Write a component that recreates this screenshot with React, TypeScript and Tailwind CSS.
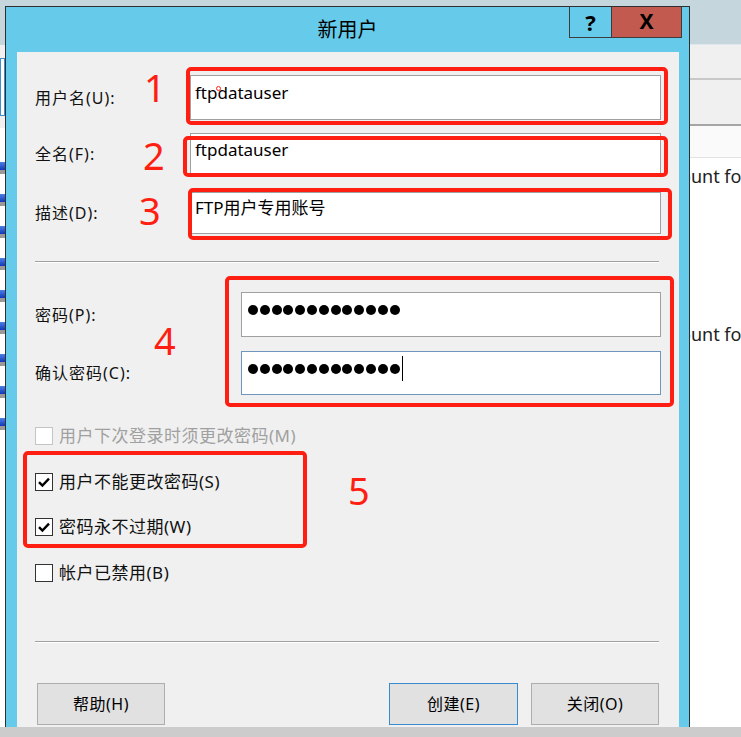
import React from 'react';

const FONT = "font-['Noto_Sans','Noto_Sans_CJK_SC',sans-serif]";

function Dots({ caret }: { caret?: boolean }) {
  return (
    <div className="flex items-center h-[25px] mt-[4px] pl-[6px] gap-[1.8px]">
      {Array.from({ length: 13 }).map((_, i) => (
        <span key={i} className="block w-[10px] h-[10px] rounded-full bg-black" />
      ))}
      {caret && <span className="block w-[1px] h-[25px] bg-black ml-[1px]" />}
    </div>
  );
}

function Check({ checked, disabled, label }: { checked?: boolean; disabled?: boolean; label: string }) {
  return (
    <div className="flex items-center h-[24px]">
      <span
        className={
          'flex items-center justify-center w-[18px] h-[18px] border bg-white ' +
          (disabled ? 'border-[#c4c4c4]' : 'border-[#333333]')
        }
      >
        {checked && (
          <svg width="14" height="14" viewBox="0 0 14 14">
            <path d="M2 7.2 L5.4 10.6 L12 3.6" fill="none" stroke="#000" strokeWidth="2.4" />
          </svg>
        )}
      </span>
      <span
        className={
          'ml-[6px] text-[17px] leading-[24px] tracking-[0.5px] ' + (disabled ? 'text-[#a0a0a0]' : 'text-[#111]')
        }
      >
        {label}
      </span>
    </div>
  );
}

export default function App() {
  return (
    <div className={'w-[741px] h-[737px] overflow-hidden flex flex-col bg-white ' + FONT}>
      <div className="flex h-[727px] overflow-hidden">
        {/* window behind, left edge */}
        <div className="w-[5px] flex flex-col">
          <div className="h-[45px] bg-[#c5d6dd]" />
          <div className="h-[83px] bg-[#f0f0f0] pt-[13px]">
            <div className="h-[58px] border border-[#3d8fd1] bg-white" />
          </div>
          <div className="flex-1 bg-white pt-[34px] flex flex-col gap-[20px]">
            {Array.from({ length: 9 }).map((_, i) => (
              <div key={i} className="flex flex-col">
                <span className="block h-[8px] bg-gradient-to-b from-[#4f7fe8] to-[#1436b8]" />
                <span className="block h-[4px] bg-[#9a9a9a]" />
              </div>
            ))}
          </div>
        </div>

        {/* dialog */}
        <div className="w-[685px] flex flex-col">
          <div className="h-[6px] bg-[#c5d6dd]" />
          <div className="flex-1 flex flex-col border-x border-t border-[#2f2f2f] bg-[#66cbea]">
            <div className="relative h-[45px] flex items-center justify-center">
              <span className="text-[20px] text-black">新用户</span>
              <div className="absolute top-0 right-[7px] flex h-[31px] border-x border-b border-[#3c3c3c]">
                <div className="w-[41px] flex items-center justify-center text-[22px] font-bold text-black">?</div>
                <div className="w-[70px] border-l border-[#3c3c3c] bg-[#c35a4f] flex items-center justify-center text-[21px] font-bold text-black">
                  X
                </div>
              </div>
            </div>

            <div className="relative flex-1 ml-[11px] mr-[10px] bg-[#f0f0f0] px-[18px] pt-[23px] flex flex-col text-[16px] tracking-[1px] text-[#111]">
              <div className="flex items-center h-[45px]">
                <span className="w-[155px]">用户名(U):</span>
                <div className="w-[471px] h-[45px] border border-[#a0a0a0] bg-white pl-[4px] pt-[6px] leading-[22px] text-[17px] tracking-normal text-black">
                  ftpdatauser
                </div>
              </div>
              <div className="flex items-center h-[42px] mt-[13px]">
                <span className="w-[155px]">全名(F):</span>
                <div className="w-[471px] h-[42px] border border-[#a0a0a0] bg-white pl-[4px] pt-[5px] leading-[22px] text-[17px] tracking-normal text-black">
                  ftpdatauser
                </div>
              </div>
              <div className="flex items-center h-[42px] mt-[17px]">
                <span className="w-[155px]">描述(D):</span>
                <div className="w-[471px] h-[42px] border border-[#a0a0a0] bg-white pl-[4px] pt-[4px] leading-[22px] text-[17px] tracking-normal text-black">
                  FTP用户专用账号
                </div>
              </div>

              <div className="w-[624px] h-[2px] mt-[27px] border-t border-[#a0a0a0] border-b border-b-white" />

              <div className="flex items-center h-[45px] mt-[29px]">
                <span className="w-[206px]">密码(P):</span>
                <div className="w-[420px] h-[45px] border border-[#a0a0a0] bg-white">
                  <Dots />
                </div>
              </div>
              <div className="flex items-center h-[44px] mt-[14px]">
                <span className="w-[206px]">确认密码(C):</span>
                <div className="w-[420px] h-[44px] border border-[#6f97bd] bg-white">
                  <Dots caret />
                </div>
              </div>

              <div className="mt-[29px]">
                <Check disabled label="用户下次登录时须更改密码(M)" />
              </div>
              <div className="mt-[22px]">
                <Check checked label="用户不能更改密码(S)" />
              </div>
              <div className="mt-[21px]">
                <Check checked label="密码永不过期(W)" />
              </div>
              <div className="mt-[22px]">
                <Check label="帐户已禁用(B)" />
              </div>

              <div className="w-[624px] h-[2px] mt-[56px] border-t border-[#a0a0a0] border-b border-b-white" />

              <div className="flex justify-between px-[2px] mt-[40px] tracking-[0.5px]">
                <button className="w-[128px] h-[42px] border border-[#adadad] bg-[#e1e1e1] text-[16px] text-black">
                  帮助(H)
                </button>
                <div className="flex gap-[13px]">
                  <button className="w-[129px] h-[42px] border border-[#3b8ad0] bg-[#e1e1e1] text-[16px] text-black">
                    创建(E)
                  </button>
                  <button className="w-[128px] h-[42px] border border-[#adadad] bg-[#e1e1e1] text-[16px] text-black">
                    关闭(O)
                  </button>
                </div>
              </div>

              {/* red annotations */}
              <div className="absolute left-[169px] top-[15px] w-[482px] h-[58px] border-4 border-[#ff1f12] rounded-[5px]" />
              <div className="absolute left-[166px] top-[84px] w-[485px] h-[41px] border-4 border-[#ff1f12] rounded-[5px]" />
              <div className="absolute left-[171px] top-[136px] w-[484px] h-[52px] border-4 border-[#ff1f12] rounded-[5px]" />
              <div className="absolute left-[208px] top-[224px] w-[449px] h-[131px] border-4 border-[#ff1f12] rounded-[5px]" />
              <div className="absolute left-[6px] top-[399px] w-[284px] h-[97px] border-4 border-[#ff1f12] rounded-[5px]" />
              <div className="absolute left-[199px] top-[34px] w-[5px] h-[5px] border-[1.5px] border-[#ff1f12] rounded-full" />

              <span className="absolute left-[127px] top-[16px] text-[38px] leading-none tracking-normal text-[#ff1f12]">1</span>
              <span className="absolute left-[126px] top-[84px] text-[38px] leading-none tracking-normal text-[#ff1f12]">2</span>
              <span className="absolute left-[122px] top-[139px] text-[38px] leading-none tracking-normal text-[#ff1f12]">3</span>
              <span className="absolute left-[137px] top-[269px] text-[38px] leading-none tracking-normal text-[#ff1f12]">4</span>
              <span className="absolute left-[331px] top-[419px] text-[38px] leading-none tracking-normal text-[#ff1f12]">5</span>
            </div>
          </div>
        </div>

        {/* window behind, right side */}
        <div className="flex-1 flex flex-col overflow-hidden">
          <div className="h-[45px] bg-[#c5d6dd] border-b border-[#dfe8ec]" />
          <div className="h-[35px] bg-[#f0f0f0] border-b-2 border-[#c8c8c8]" />
          <div className="h-[46px] bg-[#f0f0f0] border-b-2 border-[#a5a5a5]" />
          <div className="h-[32px] bg-[#fafafa] border-b border-[#e3e3e3]" />
          <div className="flex-1 bg-white text-[18px] text-[#222] whitespace-nowrap">
            <div className="ml-[-10px] mt-[6px] leading-[24px]">ount for the</div>
            <div className="ml-[-10px] mt-[134px] leading-[24px]">ount for the</div>
          </div>
        </div>
      </div>
      <div className="h-[10px] bg-[#cccccc]" />
    </div>
  );
}
